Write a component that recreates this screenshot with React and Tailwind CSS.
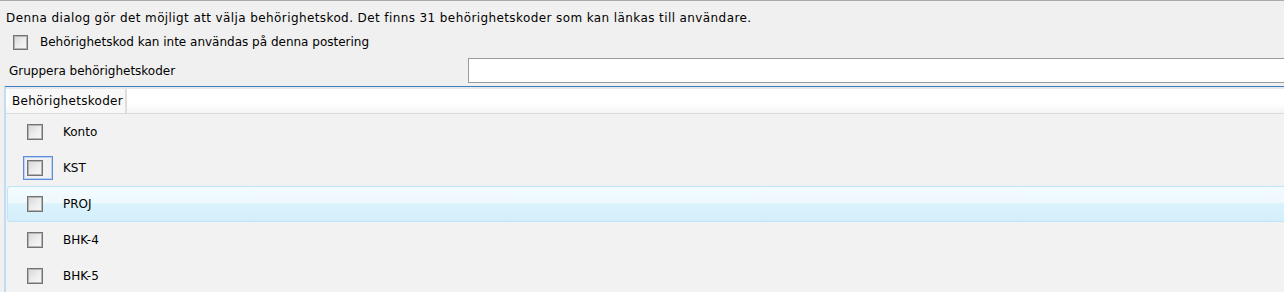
import React from "react";

function Box({ size = "w-[16px] h-[16px]" }) {
  return (
    <div
      className={`${size} shrink-0 border border-[#737373] bg-[linear-gradient(135deg,#d6d6d6_0%,#eeeeee_55%,#f7f7f7_100%)] shadow-[inset_0_0_0_1px_#b4b4b4]`}
    />
  );
}

const rows = ["Konto", "KST", "PROJ", "BHK-4", "BHK-5"];

export default function App() {
  return (
    <div className="w-[1284px] h-[292px] overflow-hidden bg-[#f0f0f0] border-t border-[#ababab] text-[12px] leading-[16px] text-black font-['DejaVu_Sans',sans-serif]">
      <p className="pl-[6px] pt-[9px] tracking-[0.4px] whitespace-nowrap">
        Denna dialog gör det möjligt att välja behörighetskod. Det finns 31 behörighetskoder som kan länkas till användare.
      </p>
      <div className="mt-[8px] h-[16px] flex items-center pl-[13px] gap-[12px]">
        <Box size="w-[15px] h-[15px]" />
        <span>Behörighetskod kan inte användas på denna postering</span>
      </div>
      <div className="mt-[8px] h-[25px] flex items-center">
        <span className="pl-[9px] w-[468px] shrink-0">Gruppera behörighetskoder</span>
        <div className="flex-1 h-[25px] bg-white border border-[#9a9a9a] mr-[-4px]" />
      </div>
      <div className="mt-[3px] ml-[4px] border-t border-[#3b7fc4] border-l-2 border-l-[#c3dcf2] bg-[#f2f2f2] h-[300px]">
        <div className="h-[27px] flex border-t-2 border-t-[#e6e8ec] border-b border-b-[#d8dadd] bg-[linear-gradient(#ffffff,#ffffff_60%,#f3f4f5)]">
          <div className="ml-[3px] w-[118px] pl-[3px] flex items-center bg-[#f8f8f8] border-r-2 border-r-[#dedede] whitespace-nowrap tracking-[0.3px]">
            Behörighetskoder
          </div>
        </div>
        {rows.map((r, i) => {
          const sel = i === 2;
          const focus = i === 1;
          return (
            <div
              key={r}
              className={
                "h-[36px] flex items-center " +
                (sel
                  ? "ml-[1px] rounded-l-[3px] border border-r-0 border-[#bfe6f8] bg-[linear-gradient(#f3fbfe_0%,#eef9fe_45%,#daf2fc_50%,#d4effb_100%)]"
                  : "ml-[1px] border border-transparent")
              }
            >
              <div
                className={
                  "ml-[15px] w-[30px] h-[24px] flex items-center pl-[3px] border " +
                  (focus
                    ? "border-[#5f8ddb] shadow-[inset_0_0_0_1px_#b9d1f3]"
                    : "border-transparent")
                }
              >
                <Box />
              </div>
              <span className="ml-[10px]">{r}</span>
            </div>
          );
        })}
      </div>
    </div>
  );
}
